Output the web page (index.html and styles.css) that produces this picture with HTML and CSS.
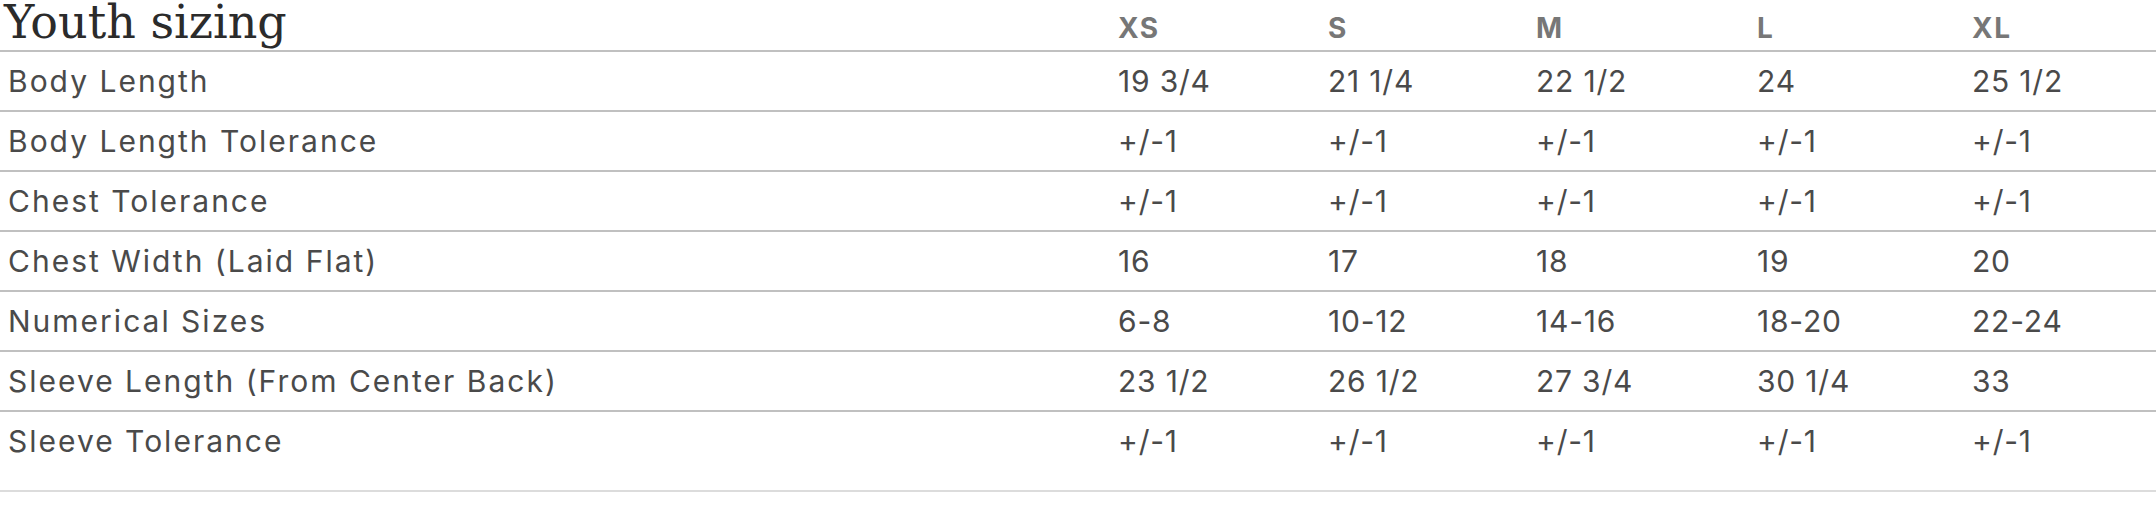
FILE: index.html
```html
<!DOCTYPE html>
<html>
<head>
<meta charset="utf-8">
<link rel="stylesheet" href="styles.css">
</head>
<body>
<table class="sizes">
  <colgroup>
    <col class="c-label">
    <col class="c-xs">
    <col class="c-s">
    <col class="c-m">
    <col class="c-l">
    <col class="c-xl">
  </colgroup>
  <thead>
    <tr>
      <th class="title"><h2>Youth sizing</h2></th>
      <th>XS</th><th>S</th><th>M</th><th>L</th><th>XL</th>
    </tr>
  </thead>
  <tbody>
    <tr><td>Body Length</td><td>19 3/4</td><td>21 1/4</td><td>22 1/2</td><td>24</td><td>25 1/2</td></tr>
    <tr><td>Body Length Tolerance</td><td>+/-1</td><td>+/-1</td><td>+/-1</td><td>+/-1</td><td>+/-1</td></tr>
    <tr><td>Chest Tolerance</td><td>+/-1</td><td>+/-1</td><td>+/-1</td><td>+/-1</td><td>+/-1</td></tr>
    <tr><td>Chest Width (Laid Flat)</td><td>16</td><td>17</td><td>18</td><td>19</td><td>20</td></tr>
    <tr><td>Numerical Sizes</td><td>6-8</td><td>10-12</td><td>14-16</td><td>18-20</td><td>22-24</td></tr>
    <tr><td>Sleeve Length (From Center Back)</td><td>23 1/2</td><td>26 1/2</td><td>27 3/4</td><td>30 1/4</td><td>33</td></tr>
    <tr class="last"><td>Sleeve Tolerance</td><td>+/-1</td><td>+/-1</td><td>+/-1</td><td>+/-1</td><td>+/-1</td></tr>
  </tbody>
</table>
</body>
</html>
```
FILE: styles.css
```css
html, body {
  margin: 0;
  padding: 0;
  background: #fff;
}

.sizes {
  width: 2156px;
  border-collapse: collapse;
  table-layout: fixed;
  font-family: Inter, "Noto Sans", sans-serif;
  color: #4a4a4a;
}

.c-label { width: 1110px; }
.c-xs { width: 210px; }
.c-s { width: 208px; }
.c-m { width: 221px; }
.c-l { width: 215px; }
.c-xl { width: 192px; }

.sizes th {
  text-align: left;
  vertical-align: baseline;
  font-size: 28px;
  font-weight: 700;
  letter-spacing: 1.5px;
  color: #777;
  height: 50px;
  padding: 0 8px 0 8px;
  border-bottom: 2px solid #c0c0c0;
  line-height: 1;
}

.sizes th.title {
  padding-left: 4px;
  letter-spacing: 0;
}

.title h2 {
  margin: 0;
  font-family: "DejaVu Serif", "Liberation Serif", serif;
  font-weight: 400;
  font-size: 46px;
  line-height: 45px;
  color: #2b2b2b;
}

.sizes td {
  font-size: 30px;
  font-weight: 400;
  letter-spacing: 2px;
  line-height: 58px;
  padding: 0 8px;
  border-bottom: 2px solid #c0c0c0;
  vertical-align: top;
}

.sizes td + td {
  letter-spacing: 0.8px;
}

.sizes tr.last td {
  padding-bottom: 20px;
  border-bottom-color: #dcdcdc;
}
```
